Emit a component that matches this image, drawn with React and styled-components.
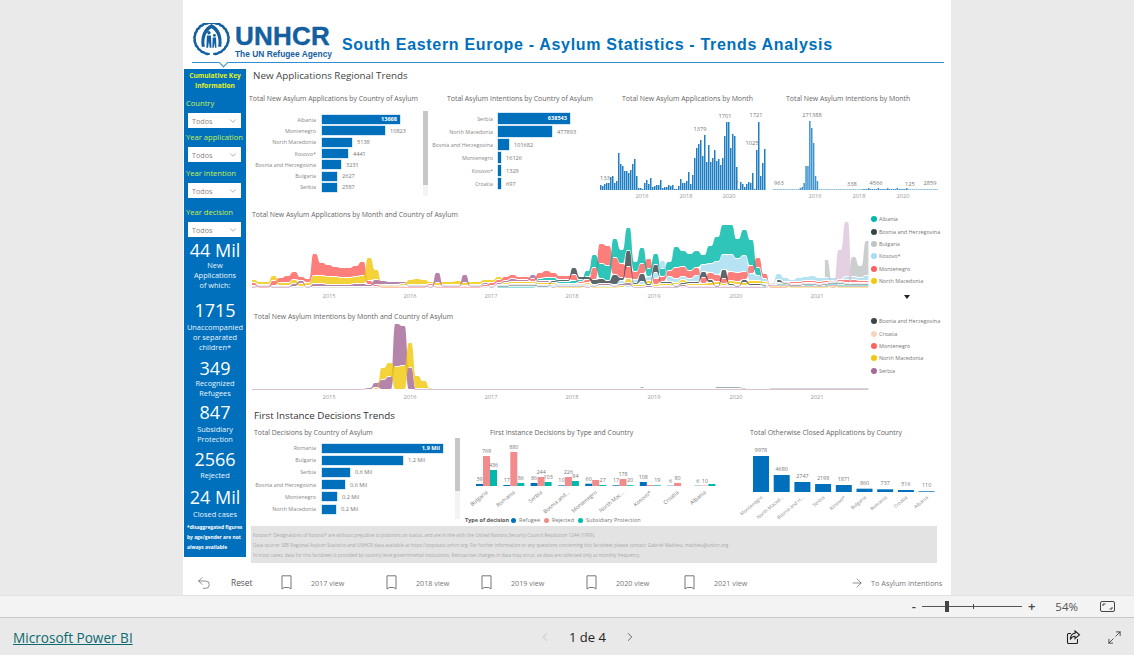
import React from 'react';
import styled, { createGlobalStyle } from 'styled-components';
import { ArrowRight, ChevronDown, ChevronLeft, ChevronRight, Maximize2, Undo2 } from 'lucide-react';

/* ---------------------------------- data ---------------------------------- */
const BLUE = '#0070BC';
const ALPHABET = '0123456789abcdefghijklmnopqrstuvwxyzABCDEFGHIJKLMNOPQRSTUVWXYZ';
// one character per month, the ribbon height in px
const decode = (rows) => [...rows.join('')].map((c) => ALPHABET.indexOf(c));

const APPLICATIONS = [
  { color: '#FD625E', h: decode(['311557844m', 'dcaaabe421', '1111112111', '1111233443', '3367544623', 'ckkhec8aa6', '56ba886775', '9988a51112', '22222123322']) },
  { color: '#F2C80F', h: decode(['3335334338', '8887778na1', '1125652333', '4333333222', '2222211112', '1111242232', '2223222332', '3333321111', '11111111111']) },
  { color: '#A66999', h: decode(['1111113313', '3222233254', '3321111a11', '1811212232', '2422111111', '1221231121', '1112111111', '1111111111', '11111111111']) },
  { color: '#01B8AA', h: decode(['0000000000', '0000000000', '0000000000', '0000001111', '1123322326', 'dffjenag8b', '89lghhaipu', 'ukqq810110', '01101111111']) },
  { color: '#A5DDF2', h: decode(['0000000000', '0000000000', '0000000000', '0000000011', '1111111111', '1111323346', '85433679df', 'heg7531642', '44543313335']) },
  { color: '#374649', h: decode(['0000000000', '0000000000', '0000000000', '0000001111', '1111222733', '553a3g2828', '2212226319', '2132210311', '11111111111']) },
  { color: '#BFC4C5', h: decode(['1111111111', '1111111111', '1111111111', '1111111111', '1111111111', '0000000000', '0000000000', '0000000000', '0000i111kcz']) },
  { color: '#DDC6DA', h: decode(['0000000000', '0000000000', '0000000000', '0000000000', '0000000000', '0000000000', '1111111111', '1111111111', '111111uT111']) },
];

const INTENTIONS = [
  { color: '#A66999', h: decode(['1111111111', '111111125a', 'dHEm111111', '1111111111', '1111111111', '1111111111', '1111111111', '1111111111', '11111111111']) },
  { color: '#F2C80F', h: decode(['0000000000', '000000002c', 'enopd81000', '0000000000', '0000000000', '0000000000', '0000000000', '0000000000', '00000000000']) },
  { color: '#374649', h: decode(['0000000000', '0000000000', '0000000000', '0000000000', '0000000000', '0000000200', '0000000022', '2210001111', '11111111111']), faint: 0.45 },
];

const MONTHLY = [
  5, 4, 6, 7, 7, 13, 14, 7, 9, 37, 26, 24, 19, 19, 17, 20, 26, 31, 14, 2, 2, 1, 7, 10, 6, 12, 3, 4, 5, 5, 10, 2, 3, 3, 5, 4, 5, 1, 1, 4, 11,
  7, 7, 9, 18, 6, 15, 32, 42, 46, 50, 34, 55, 28, 45, 28, 32, 40, 29, 31, 25, 32, 54, 68, 68, 42, 56, 54, 23, 1, 8, 6, 3, 6, 8, 7, 17, 1, 40, 68, 14, 27, 41,
];
const INTENTION_MONTHLY = Array.from({ length: 87 }, (_, i) => {
  const peak = { 14: 2, 15: 3, 16: 7, 17: 24, 18: 24, 19: 69, 20: 62, 21: 47, 22: 14, 23: 9 };
  const tail = i > 46 && i < 71 ? 1 + (i % 5 === 0 ? 1 : 0) : 0.6;
  return peak[i] || tail;
});

const NEW_BY_COUNTRY = [
  ['Albania', 78, '13668', true], ['Montenegro', 63, '10823'], ['North Macedonia', 30, '5138'], ['Kosovo*', 26, '4441'],
  ['Bosnia and Herzegovina', 19, '3231'], ['Bulgaria', 15, '2627'], ['Serbia', 15, '2587'],
];
const INTENTION_BY_COUNTRY = [
  ['Serbia', 72, '638543', true], ['North Macedonia', 54, '477893'], ['Bosnia and Herzegovina', 11, '101682'],
  ['Montenegro', 2, '16126'], ['Kosovo*', 0.7, '1329'], ['Croatia', 0.7, '697'],
];
const DECISIONS = [
  ['Romania', 121, '1,9 Mil', true], ['Bulgaria', 81, '1,2 Mil'], ['Serbia', 28, '0,6 Mil'],
  ['Bosnia and Herzegovina', 23, '0,6 Mil'], ['Montenegro', 15, '0,2 Mil'], ['North Macedonia', 14, '0,2 Mil'],
];
const BY_TYPE = [
  ['Bulgaria', [2, 30, 16], ['39', '769', '436']],
  ['Romania', [1, 34, 3], ['17', '880', '86']],
  ['Serbia', [3, 9, 4], ['86', '244', '103']],
  ['Bosnia and...', [0.6, 9, 5], ['10', '226', '84']],
  ['Montenegro', [2.3, 6, 1], ['60', '', '27']],
  ['North Mac...', [0.7, 7, 0.8], ['17', '178', '20']],
  ['Kosovo*', [4, 1, 0.7], ['108', '', '19']],
  ['Croatia', [0.3, 3, 0], ['6', '80', '']],
  ['Albania', [0.3, 0.4, 2], ['6', '10', '']],
];
const CLOSED = [
  ['Montenegro', 36, '9978'], ['North Maced...', 17, '4680'], ['Bosnia and H...', 10, '2747'], ['Serbia', 8, '2198'], ['Kosovo*', 7, '1871'],
  ['Bulgaria', 3.3, '860'], ['Romania', 2.7, '737'], ['Croatia', 2, '516'], ['Albania', 0.7, '110'],
];
const TYPE_COLORS = [BLUE, '#F28B8B', '#01B8AA'];
const YEARS = [['2015', 77], ['2016', 158], ['2017', 239], ['2018', 320], ['2019', 402], ['2020', 484], ['2021', 565]];

/* ---------------------------------- style --------------------------------- */
const GlobalStyle = createGlobalStyle`
  html, body { margin: 0; padding: 0; background: #eaeaea; }
  body { font-family: "Open Sans", "Noto Sans", Arial, sans-serif; }
`;
const Page = styled.div`
  width: 1134px;
  height: 655px;
  overflow: hidden;
  display: flex;
  flex-direction: column;
`;
const Stage = styled.div`
  height: 595px;
  display: flex;
  justify-content: center;
  background: #eaeaea;
`;
const Report = styled.div`
  width: 768px;
  height: 595px;
  background: #fff;
  overflow: hidden;
`;
const Header = styled.header`
  position: relative;
  height: 62px;
  margin: 0 7px 0 9px;
  border-bottom: 1px solid #2f8ed0;
  display: flex;
  align-items: flex-start;
  &::after {
    content: '';
    position: absolute;
    left: 28px;
    bottom: -4px;
    width: 6px;
    height: 6px;
    background: #fff;
    border-right: 1px solid #2f8ed0;
    border-bottom: 1px solid #2f8ed0;
    transform: rotate(45deg);
  }
`;
const Logo = styled.div`
  display: flex;
  margin-top: 23px;
  gap: 4px;
`;
const LogoWords = styled.div`
  font-family: "Liberation Sans", Arial, sans-serif;
  font-weight: bold;
  color: #14609f;
  width: 95px;
`;
const LogoName = styled.div`
  font-size: 26px;
  line-height: 26px;
  letter-spacing: 0.2px;
  -webkit-text-stroke: 0.4px #14609f;
`;
const LogoTag = styled.div`
  font-size: 8.4px;
  line-height: 9px;
  margin-top: 0.6px;
  white-space: nowrap;
`;
const Title = styled.h1`
  margin: 35px 0 0 12px;
  font: bold 16px/20px "Liberation Sans", Arial, sans-serif;
  letter-spacing: 0.68px;
  color: ${BLUE};
  white-space: nowrap;
`;
const Body = styled.div`
  display: flex;
  height: 494px;
  margin-top: 6px;
`;
const Sidebar = styled.aside`
  width: 62px;
  height: 488px;
  margin-left: 1px;
  background: ${BLUE};
  color: #fff;
  text-align: center;
  overflow: hidden;
`;
const KeyTitle = styled.div`
  padding-top: 2px;
  font-size: 6.6px;
  font-weight: 700;
  line-height: 10px;
  color: #e6f01e;
`;
const FieldLabel = styled.div`
  margin: ${(p) => p.$gap}px 0 5px 2px;
  font-size: 7.6px;
  line-height: 10px;
  text-align: left;
  white-space: nowrap;
  color: #c9f04a;
`;
const Select = styled.div`
  display: flex;
  align-items: center;
  justify-content: space-between;
  width: 53px;
  height: 15px;
  margin-left: 4px;
  padding: 0 3px 0 4px;
  box-sizing: border-box;
  background: #fff;
  color: #8a7f80;
  font-size: 7.2px;
`;
const StatValue = styled.div`
  margin-top: ${(p) => p.$gap}px;
  font-size: 18px;
  line-height: 20px;
  white-space: nowrap;
`;
const StatLabel = styled.div`
  margin-top: ${(p) => p.$gap || 0}px;
  font-size: 7.4px;
  line-height: 10px;
  color: #eaf4fb;
`;
const Disclaimer = styled.div`
  margin: 3px 0 0 3px;
  font-size: 4.9px;
  font-weight: 700;
  line-height: 10px;
  text-align: left;
  white-space: nowrap;
`;
const Main = styled.main`
  width: 697px;
  margin-left: 2px;
`;
const SectionTitle = styled.h2`
  margin: 0 0 0 ${(p) => p.$indent}px;
  font-size: 9.8px;
  font-weight: 400;
  line-height: 14px;
  color: ${(p) => p.$color || '#444'};
`;
const ChartTitle = styled.h3`
  margin: 0 0 0 ${(p) => p.$indent || 0}px;
  height: 14px;
  font-size: 6.9px;
  font-weight: 400;
  line-height: 14px;
  color: #666;
  white-space: nowrap;
`;
const TopRow = styled.section`
  display: grid;
  grid-template-columns: 183px 169px 173px 172px;
  height: 115px;
  margin: 9px 0 1px;
`;
const BottomRow = styled.section`
  display: grid;
  grid-template-columns: 212px 285px 200px;
  height: 100px;
  margin-top: 3px;
`;
const BarArea = styled.div`
  display: flex;
  justify-content: space-between;
  padding-right: ${(p) => p.$right || 0}px;
`;
const BarList = styled.div`
  padding-top: ${(p) => p.$top}px;
`;
const BarRow = styled.div`
  display: flex;
  align-items: center;
  height: ${(p) => p.$pitch}px;
`;
const BarLabel = styled.div`
  width: ${(p) => p.$width}px;
  margin-right: ${(p) => p.$gap}px;
  text-align: right;
  font-size: 5.4px;
  color: #888;
  white-space: nowrap;
`;
const Bar = styled.div`
  height: ${(p) => p.$height}px;
  background: ${BLUE};
  box-shadow: 0 0 0 0.5px #a9cfe9;
  color: #fff;
  font-size: 5.6px;
  font-weight: 700;
  line-height: ${(p) => p.$height}px;
  text-align: right;
  padding-right: 3px;
  box-sizing: border-box;
  white-space: nowrap;
`;
const BarValue = styled.div`
  margin-left: 5px;
  font-size: 5.6px;
  color: #777;
`;
const ScrollTrack = styled.div`
  width: 5px;
  height: ${(p) => p.$height}px;
  margin-top: ${(p) => p.$top}px;
  background: #f3f3f3;
`;
const ScrollThumb = styled.div`
  height: ${(p) => p.$height}px;
  background: #c6c6c6;
`;
const Plot = styled.svg`
  display: block;
  overflow: visible;
`;
const ChartText = styled.text`
  font-size: ${(p) => p.$size || 5.7}px;
  fill: ${(p) => p.$fill || '#777'};
`;
const RibbonRow = styled.section`
  display: flex;
  height: ${(p) => p.$height}px;
`;
const RibbonCol = styled.div`
  width: 623px;
`;
const Legend = styled.ul`
  width: 73px;
  margin: 0;
  padding: 5px 0 0;
  list-style: none;
`;
const LegendItem = styled.li`
  display: flex;
  align-items: center;
  gap: 1px;
  height: 12.4px;
  font-size: 5.45px;
  color: #777;
  white-space: nowrap;
`;
const Dot = styled.i`
  flex: none;
  width: ${(p) => p.$size || 6}px;
  height: ${(p) => p.$size || 6}px;
  margin-right: 1px;
  border-radius: 50%;
  background: ${(p) => p.$color};
`;
const MoreArrow = styled.div`
  width: 0;
  margin: 8px 0 0 33px;
  border-left: 3px solid transparent;
  border-right: 3px solid transparent;
  border-top: 4px solid #222;
`;
const TypeLegend = styled.div`
  display: flex;
  align-items: center;
  gap: 2px;
  height: 8px;
  margin-left: 5px;
  font-size: 5.5px;
  color: #777;
  white-space: nowrap;
`;
const TypeTitle = styled.b`
  color: #555;
`;
const TypeEntry = styled.span`
  margin-right: 2px;
`;
const Footnote = styled.footer`
  width: 686px;
  height: 37px;
  margin-left: 3px;
  padding-top: 4px;
  box-sizing: border-box;
  background: #e3e3e3;
  color: #a9a9a9;
  font-size: 4.65px;
  line-height: 10px;
  white-space: nowrap;
`;
const FootLine = styled.div`
  padding-left: 2px;
`;
const NavBar = styled.nav`
  display: grid;
  grid-template-columns: 85px 105px 95px 105px 98px 166px 1fr;
  align-items: center;
  height: 25px;
  margin-top: 7px;
  padding-left: 13px;
  color: #777;
`;
const NavItem = styled.div`
  display: flex;
  align-items: center;
  gap: ${(p) => p.$gap}px;
  font-size: ${(p) => p.$size || 7.2}px;
  white-space: nowrap;
`;
const ResetText = styled.span`
  color: #555;
  font-size: 8.4px;
`;
const ZoomBar = styled.div`
  display: flex;
  align-items: center;
  justify-content: flex-end;
  height: 23px;
  box-sizing: border-box;
  padding-right: 19px;
  background: #f3f3f3;
  border-top: 1px solid #e2e2e2;
  border-bottom: 1px solid #c8c8c8;
  color: #444;
`;
const ZoomSign = styled.span`
  font-size: 13px;
  font-weight: 600;
  line-height: 13px;
`;
const ZoomTrack = styled.div`
  position: relative;
  width: 100px;
  height: 1px;
  margin: 0 6px;
  background: #555;
`;
const ZoomTick = styled.i`
  position: absolute;
  left: ${(p) => p.$left}px;
  top: ${(p) => -p.$height / 2}px;
  width: ${(p) => p.$width}px;
  height: ${(p) => p.$height}px;
  background: #444;
`;
const ZoomValue = styled.span`
  margin: 0 22px 0 20px;
  font-size: 11.5px;
  color: #555;
`;
const PageFooter = styled.div`
  display: flex;
  align-items: center;
  height: 37px;
  padding-top: 1px;
  box-sizing: border-box;
  background: #e9e9e9;
`;
const PowerBiLink = styled.a`
  width: 538px;
  padding-left: 13px;
  box-sizing: border-box;
  color: #0c6a70;
  font-size: 13.6px;
  text-decoration: underline;
`;
const Pager = styled.div`
  display: flex;
  align-items: center;
  font-size: 13px;
  color: #222;
`;
const PagerText = styled.span`
  margin: 0 17px;
`;
const FooterActions = styled.div`
  display: flex;
  gap: 26px;
  margin-left: auto;
  margin-right: 12px;
`;

/* --------------------------------- drawings -------------------------------- */
const WreathSide = ({ flip }) => {
  const leaves = [];
  for (let a = -75; a <= 110; a += 15) {
    const r = (a * Math.PI) / 180;
    const cx = 19 + 16.5 * Math.cos(r);
    const cy = 15 - 15.5 * Math.sin(r);
    leaves.push(<ellipse key={a} cx={cx} cy={cy} rx="1.3" ry="3" transform={`rotate(${-a + 10} ${cx} ${cy})`} />);
  }
  return <g fill="#14609f" transform={flip ? 'matrix(-1 0 0 1 38 0)' : undefined}>{leaves}</g>;
};

const Emblem = () => (
  <svg width="39" height="33" viewBox="0 0 38 32">
    <WreathSide />
    <WreathSide flip />
    <path d="M9.5 23C8 13 11 5 19 1c8 4 11 12 9.5 22h-3C27 14 24 8 19 5 14 8 11 14 12.5 23z" fill="#14609f" />
    <circle cx="16.5" cy="9.5" r="1.7" fill="#14609f" />
    <path d="M14.5 12h4l.5 12h-1.7l-.8-6-.8 6H14z" fill="#14609f" />
    <circle cx="21.8" cy="12" r="1.4" fill="#14609f" />
    <path d="M20.2 14h3.2l.4 10h-1.4l-.6-5-.6 5h-1.400z" fill="#14609f" />
  </svg>
);

const BookmarkIcon = () => (
  <svg width="11" height="15" viewBox="0 0 11 15" fill="none" stroke="#777" strokeWidth="1">
    <path d="M1 .8h9v13.2l-2.2-1.500H3.200L1 14z" />
  </svg>
);
const FitIcon = () => (
  <svg width="15" height="11" viewBox="0 0 15 11" fill="none" stroke="#444" strokeWidth="1">
    <rect x=".5" y=".5" width="14" height="10" rx="1.5" />
    <path d="M3 5V3h2.5M12 6v2H9.5" />
  </svg>
);
const ShareIcon = () => (
  <svg width="15" height="15" viewBox="0 0 15 15" fill="none" stroke="#222" strokeWidth="1.1">
    <path d="M11.5 9v3.5a1 1 0 0 1-1 1h-8a1 1 0 0 1-1-1v-8a1 1 0 0 1 1-1H5" />
    <path d="M9 1l4.500 3.800L9 8.500V6.300C6.800 6.300 5.300 7.300 4.300 9.500c.2-3.500 2-6 4.700-6.200z" />
  </svg>
);

/* ------------------------------- chart parts ------------------------------- */
// ribbon chart: biggest series on top, flat on the month and curved between
const ribbonPaths = (series) => {
  const step = 6.82;
  const flat = 2.6;
  const gap = 0.9;
  const base = 66;
  const months = series[0].h.length;
  const tops = series.map(() => new Array(months).fill(base));
  const bots = series.map(() => new Array(months).fill(base));
  for (let m = 0; m < months; m += 1) {
    const order = series.map((s, i) => [s.h[m] || 0, i]).sort((a, b) => a[0] - b[0]);
    let y = base;
    order.forEach(([v, i]) => {
      bots[i][m] = y - Math.min(gap, v * 0.5);
      tops[i][m] = y - v;
      y -= v;
    });
  }
  const X = (m) => 4 + m * step;
  return series.map((s, i) => {
    let d = '';
    let m = 0;
    while (m < months) {
      if (!s.h[m]) { m += 1; continue; }
      const a = m;
      while (m + 1 < months && s.h[m + 1]) m += 1;
      const b = m;
      d += `M${X(a)} ${tops[i][a]}`;
      for (let k = a; k <= b; k += 1) {
        d += `L${X(k) + flat} ${tops[i][k]}`;
        if (k < b) {
          const mid = X(k) + flat + (step - flat) / 2;
          d += `C${mid} ${tops[i][k]} ${mid} ${tops[i][k + 1]} ${X(k + 1)} ${tops[i][k + 1]}`;
        }
      }
      for (let k = b; k >= a; k -= 1) {
        d += `L${X(k) + flat} ${bots[i][k]}L${X(k)} ${bots[i][k]}`;
        if (k > a) {
          const mid = X(k) - (step - flat) / 2;
          d += `C${mid} ${bots[i][k]} ${mid} ${bots[i][k - 1]} ${X(k - 1) + flat} ${bots[i][k - 1]}`;
        }
      }
      d += 'Z';
      m += 1;
    }
    return { d, color: s.color, faint: s.faint };
  });
};

const Ribbon = ({ series, labelY }) => (
  <Plot width="620" height="80" viewBox="0 0 620 80">
    {ribbonPaths(series).map((p) => (
      <path key={p.color} d={p.d} fill={p.color} fillOpacity={p.faint || 0.82} />
    ))}
    {YEARS.map(([year, x]) => (
      <ChartText key={year} x={x + 4} y={labelY} textAnchor="middle" $fill="#999">{year}</ChartText>
    ))}
  </Plot>
);

const LegendList = ({ items, more }) => (
  <Legend>
    {items.map(([name, color]) => (
      <LegendItem key={name}><Dot $color={color} />{name}</LegendItem>
    ))}
    {more && <MoreArrow />}
  </Legend>
);

const HBars = ({ rows, labelWidth, labelGap, pitch, height, top }) => (
  <BarList $top={top}>
    {rows.map(([name, width, value, inside]) => (
      <BarRow key={name} $pitch={pitch}>
        <BarLabel $width={labelWidth} $gap={labelGap}>{name}</BarLabel>
        <Bar $height={height} style={{ width }}>{inside && value}</Bar>
        {!inside && <BarValue>{value}</BarValue>}
      </BarRow>
    ))}
  </BarList>
);

const MonthBars = ({ data, pitch, width, color, labels, years }) => (
  <Plot width="172" height="93" viewBox="0 0 172 93">
    {data.map((h, i) => (
      <rect key={i} x={i * pitch} y={84 - h} width={width} height={h} fill={color} />
    ))}
    {labels.map(([text, x, y]) => (
      <ChartText key={text} x={x} y={y} textAnchor="middle">{text}</ChartText>
    ))}
    {years.map(([year, x]) => (
      <ChartText key={year} x={x} y={92} textAnchor="middle" $fill="#999">{year}</ChartText>
    ))}
  </Plot>
);

const TypeChart = () => (
  <Plot width="285" height="76" viewBox="0 0 285 76">
    {BY_TYPE.map(([name, heights, values], g) => {
      const x0 = 16 + g * 27.3;
      return (
        <g key={name}>
          {heights.map((h, i) => (
            <rect key={i} x={x0 + i * 7} y={46 - h} width="7" height={h} fill={TYPE_COLORS[i]} />
          ))}
          {values.map((v, i) => v && (
            <ChartText key={i} x={x0 + 3.5 + i * 7} y={46 - heights[i] - 3} textAnchor="middle" $size={5.4}>{v}</ChartText>
          ))}
          <ChartText x={x0 + 12} y={53} textAnchor="end" $size={5.4} transform={`rotate(-40 ${x0 + 12} 53)`}>{name}</ChartText>
        </g>
      );
    })}
  </Plot>
);

const ClosedChart = () => (
  <Plot width="200" height="85" viewBox="0 0 200 85">
    {CLOSED.map(([name, h, value], i) => {
      const x = 8 + i * 20.7;
      return (
        <g key={name}>
          <rect x={x} y={52 - h} width="16" height={h} fill={BLUE} />
          <ChartText x={x + 8} y={52 - h - 4} textAnchor="middle" $size={5.4}>{value}</ChartText>
          <ChartText x={x + 10} y={58} textAnchor="end" $size={4.8} $fill="#888" transform={`rotate(-40 ${x + 10} 58)`}>{name}</ChartText>
        </g>
      );
    })}
  </Plot>
);

/* -------------------------------- component ------------------------------- */
const Field = ({ label, gap }) => (
  <>
    <FieldLabel $gap={gap}>{label}</FieldLabel>
    <Select>Todos<ChevronDown size={10} strokeWidth={1} color="#444" /></Select>
  </>
);

const Stat = ({ value, gap, labelGap, children }) => (
  <>
    <StatValue $gap={gap}>{value}</StatValue>
    <StatLabel $gap={labelGap}>{children}</StatLabel>
  </>
);

const ViewButton = ({ year }) => (
  <NavItem $gap={19}><BookmarkIcon />{year} view</NavItem>
);

const App = () => (
  <Page>
    <GlobalStyle />
    <Stage>
      <Report>
        <Header>
          <Logo>
            <Emblem />
            <LogoWords>
              <LogoName>UNHCR</LogoName>
              <LogoTag>The UN Refugee Agency</LogoTag>
            </LogoWords>
          </Logo>
          <Title>South Eastern Europe - Asylum Statistics - Trends Analysis</Title>
        </Header>
        <Body>
          <Sidebar>
            <KeyTitle>Cumulative Key<br />Information</KeyTitle>
            <Field label="Country" gap={7} />
            <Field label="Year application" gap={4} />
            <Field label="Year intention" gap={6} />
            <Field label="Year decision" gap={9} />
            <Stat value="44 Mil" gap={3}>New<br />Applications<br />of which:</Stat>
            <Stat value="1715" gap={10} labelGap={2}>Unaccompanied<br />or separated<br />children*</Stat>
            <Stat value="349" gap={6}>Recognized<br />Refugees</Stat>
            <Stat value="847" gap={4} labelGap={2}>Subsidiary<br />Protection</Stat>
            <Stat value="2566" gap={5} labelGap={1}>Rejected</Stat>
            <Stat value="24 Mil" gap={7} labelGap={2}>Closed cases</Stat>
            <Disclaimer>*disaggregated figures<br />by age/gender are not<br />always available</Disclaimer>
          </Sidebar>
          <Main>
            <SectionTitle $indent={5}>New Applications Regional Trends</SectionTitle>
            <TopRow>
              <div>
                <ChartTitle $indent={1}>Total New Asylum Applications by Country of Asylum</ChartTitle>
                <BarArea $right={3}>
                  <HBars rows={NEW_BY_COUNTRY} labelWidth={68} labelGap={6} pitch={11.3} height={9} top={8} />
                  <ScrollTrack $height={85} $top={5}><ScrollThumb $height={74} /></ScrollTrack>
                </BarArea>
              </div>
              <div>
                <ChartTitle $indent={16}>Total Asylum Intentions by Country of Asylum</ChartTitle>
                <HBars rows={INTENTION_BY_COUNTRY} labelWidth={62} labelGap={5} pitch={13} height={11} top={6} />
              </div>
              <div>
                <ChartTitle $indent={22}>Total New Asylum Applications by Month</ChartTitle>
                <MonthBars
                  data={MONTHLY}
                  pitch={2}
                  width={1.5}
                  color="#1f7fc2"
                  labels={[['133', 5, 74], ['1379', 100, 25], ['1701', 125, 12], ['1721', 156, 11], ['1025', 152, 39], ['7', 137, 79]]}
                  years={[['2016', 42], ['2018', 86], ['2020', 129]]}
                />
              </div>
              <div>
                <ChartTitle $indent={13}>Total New Asylum Intentions by Month</ChartTitle>
                <MonthBars
                  data={INTENTION_MONTHLY}
                  pitch={1.9}
                  width={1.5}
                  color="#3f94cd"
                  labels={[['963', 6, 79], ['271388', 39, 11], ['338', 79, 80], ['4566', 103, 79], ['125', 137, 80], ['2859', 157, 79]]}
                  years={[['2016', 42], ['2018', 86], ['2020', 130]]}
                />
              </div>
            </TopRow>
            <RibbonRow $height={102}>
              <RibbonCol>
                <ChartTitle $indent={4}>Total New Asylum Applications by Month and Country of Asylum</ChartTitle>
                <Ribbon series={APPLICATIONS} labelY={76} />
              </RibbonCol>
              <LegendList
                more
                items={[['Albania', '#01B8AA'], ['Bosnia and Herzegovina', '#374649'], ['Bulgaria', '#BFC4C5'], ['Kosovo*', '#A5DDF2'], ['Montenegro', '#FD625E'], ['North Macedonia', '#F2C80F']]}
              />
            </RibbonRow>
            <RibbonRow $height={99}>
              <RibbonCol>
                <ChartTitle $indent={6}>Total New Asylum Intentions by Month and Country of Asylum</ChartTitle>
                <Ribbon series={INTENTIONS} labelY={75} />
              </RibbonCol>
              <LegendList
                items={[['Bosnia and Herzegovina', '#374649'], ['Croatia', '#FBD3C4'], ['Montenegro', '#FD625E'], ['North Macedonia', '#F2C80F'], ['Serbia', '#A66999']]}
              />
            </RibbonRow>
            <SectionTitle $indent={6} $color="#333">First Instance Decisions Trends</SectionTitle>
            <BottomRow>
              <div>
                <ChartTitle $indent={6}>Total Decisions by Country of Asylum</ChartTitle>
                <BarArea>
                  <HBars rows={DECISIONS} labelWidth={68} labelGap={6} pitch={12.2} height={9} top={2} />
                  <ScrollTrack $height={81} $top={-2}><ScrollThumb $height={53} /></ScrollTrack>
                </BarArea>
              </div>
              <div>
                <ChartTitle $indent={30}>First Instance Decisions by Type and Country</ChartTitle>
                <TypeChart />
                <TypeLegend>
                  <TypeTitle>Type of decision</TypeTitle>
                  <Dot $size={5} $color={BLUE} /><TypeEntry>Refugee</TypeEntry>
                  <Dot $size={5} $color={TYPE_COLORS[1]} /><TypeEntry>Rejected</TypeEntry>
                  <Dot $size={5} $color={TYPE_COLORS[2]} /><TypeEntry>Subsidiary Protection</TypeEntry>
                </TypeLegend>
              </div>
              <div>
                <ChartTitle $indent={5}>Total Otherwise Closed Applications by Country</ChartTitle>
                <ClosedChart />
              </div>
            </BottomRow>
            <Footnote>
              <FootLine>Kosovo*: Designations of Kosovo* are without prejudice to positions on status, and are in line with the United Nations Security Council Resolution 1244 (1999).</FootLine>
              <FootLine>Data source: SEE Regional Asylum Statistics and UNHCR data available at https://popstats.unhcr.org. For further information or any questions concerning this factsheet please contact: Gabriel Mathieu, mathieu@unhcr.org</FootLine>
              <FootLine>In most cases, data for this factsheet is provided by country level governmental institutions. Retroactive changes in data may occur, as data are collected only at monthly frequency.</FootLine>
            </Footnote>
          </Main>
        </Body>
        <NavBar>
          <NavItem $gap={19}><Undo2 size={16} strokeWidth={1} color="#555" /><ResetText>Reset</ResetText></NavItem>
          <ViewButton year={2017} />
          <ViewButton year={2018} />
          <ViewButton year={2019} />
          <ViewButton year={2020} />
          <ViewButton year={2021} />
          <NavItem $gap={7} $size={7.3}><ArrowRight size={14} strokeWidth={1} color="#444" />To Asylum intentions</NavItem>
        </NavBar>
      </Report>
    </Stage>
    <ZoomBar>
      <ZoomSign>-</ZoomSign>
      <ZoomTrack>
        <ZoomTick $left={23} $width={4} $height={11} />
        <ZoomTick $left={51} $width={1} $height={5} />
      </ZoomTrack>
      <ZoomSign>+</ZoomSign>
      <ZoomValue>54%</ZoomValue>
      <FitIcon />
    </ZoomBar>
    <PageFooter>
      <PowerBiLink>Microsoft Power BI</PowerBiLink>
      <Pager>
        <ChevronLeft size={14} strokeWidth={1} color="#aaa" />
        <PagerText>1 de 4</PagerText>
        <ChevronRight size={14} strokeWidth={1.2} color="#333" />
      </Pager>
      <FooterActions>
        <ShareIcon />
        <Maximize2 size={15} strokeWidth={1.2} color="#222" />
      </FooterActions>
    </PageFooter>
  </Page>
);

export default App;
